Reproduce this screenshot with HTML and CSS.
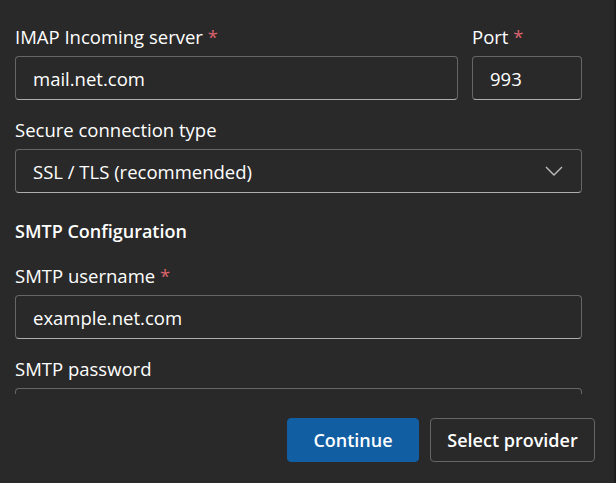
FILE: index.html
```html
<!DOCTYPE html>
<html lang="en">
<head>
	<meta charset="UTF-8">
	<title>IMAP settings</title>
	<link rel="stylesheet" href="styles.css">
</head>
<body>
	<div class="dialog">
		<div class="scroll">
			<div class="row">
				<div class="field grow">
					<label class="label">IMAP Incoming server <span class="req">*</span></label>
					<div class="input">mail.net.com</div>
				</div>
				<div class="field port">
					<label class="label">Port <span class="req">*</span></label>
					<div class="input">993</div>
				</div>
			</div>
			<div class="field">
				<label class="label">Secure connection type</label>
				<div class="input select">
					<span>SSL / TLS (recommended)</span>
					<svg class="chev" width="18" height="10" viewBox="0 0 18 10"><path d="M1 1l8 8 8-8" fill="none" stroke="#bdbdbd" stroke-width="1.4"/></svg>
				</div>
			</div>
			<h3 class="section">SMTP Configuration</h3>
			<div class="field">
				<label class="label">SMTP username <span class="req">*</span></label>
				<div class="input">example.net.com</div>
			</div>
			<div class="field">
				<label class="label">SMTP password</label>
				<div class="input"></div>
			</div>
		</div>
		<div class="footer">
			<button class="btn primary">Continue</button>
			<button class="btn secondary">Select provider</button>
		</div>
	</div>
</body>
</html>
```

FILE: styles.css
```css
*{ margin:0; padding:0; box-sizing:border-box;}
body{ background:#292929; font-family:"Open Sans","Noto Sans",sans-serif; font-size:18.5px; color:#fff; width:616px; height:483px; overflow:hidden;}
.dialog{ width:616px; height:483px; border-right:2px solid #1e1e1e; display:flex; flex-direction:column;}
.scroll{ height:394px; overflow:hidden; padding:25px 32px 0 15px;}
.row{ display:flex; gap:14px;}
.grow{ flex:1;}
.port{ width:110px;}
.field{ display:flex; flex-direction:column; gap:7px; margin-bottom:18px;}
.label{ line-height:24px;}
.req{ color:#dc626d;}
.input{ height:44px; border:1px solid #666; border-bottom-color:#adadad; border-radius:4px; padding:0 17px; display:flex; align-items:center;}
.select{ justify-content:space-between; padding-right:18px;}
.section{ font-size:18px; font-weight:600; line-height:24px; margin:26px 0 21px;}
.footer{ display:flex; justify-content:flex-end; gap:11px; padding:24px 19px 0 0;}
.btn{ height:44px; border:1px solid #666; border-radius:4px; background:#292929; color:#fff; font-family:inherit; font-size:18px; font-weight:600;}
.primary{ width:132px; background:#115ea3; border-color:#115ea3;}
.secondary{ width:165px;}
```
